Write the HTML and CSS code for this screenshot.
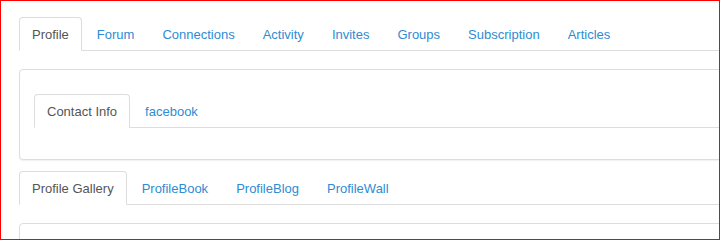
FILE: index.html
```html
<!DOCTYPE html>
<html>
<head>
<meta charset="utf-8">
<link rel="stylesheet" href="styles.css">
</head>
<body>
<div class="frame">
  <div class="content">
    <ul class="tabs">
      <li class="active"><a href="#">Profile</a></li>
      <li><a href="#">Forum</a></li>
      <li><a href="#">Connections</a></li>
      <li><a href="#">Activity</a></li>
      <li><a href="#">Invites</a></li>
      <li><a href="#">Groups</a></li>
      <li><a href="#">Subscription</a></li>
      <li><a href="#">Articles</a></li>
    </ul>
    <div class="panel panel-contact">
      <ul class="tabs">
        <li class="active"><a href="#">Contact Info</a></li>
        <li><a href="#">facebook</a></li>
      </ul>
    </div>
    <ul class="tabs">
      <li class="active"><a href="#">Profile Gallery</a></li>
      <li><a href="#">ProfileBook</a></li>
      <li><a href="#">ProfileBlog</a></li>
      <li><a href="#">ProfileWall</a></li>
    </ul>
    <div class="panel panel-empty"></div>
  </div>
</div>
</body>
</html>
```

FILE: styles.css
```css
html, body {
  margin: 0;
  padding: 0;
  background: #fff;
}

.frame {
  box-sizing: border-box;
  width: 720px;
  height: 240px;
  border: 1px solid #ff0000;
  overflow: hidden;
  padding: 16px 0 0 18px;
  font-family: "Liberation Sans", Arial, sans-serif;
  font-size: 13px;
}

.content {
  width: 760px;
}

.tabs {
  display: flex;
  list-style: none;
  margin: 0;
  padding: 0;
  border-bottom: 1px solid #dddddd;
}

.tabs li {
  margin: 0 2px -1px 0;
}

.tabs a {
  display: block;
  padding: 8px 12px 6px;
  line-height: 18px;
  border: 1px solid transparent;
  border-radius: 4px 4px 0 0;
  color: #2f8bd3;
  text-decoration: none;
}

.tabs .active a {
  color: #555555;
  background: #ffffff;
  border-color: #dddddd #dddddd transparent;
}

.panel {
  margin-top: 18px;
  border: 1px solid #dddddd;
  border-radius: 4px;
  box-shadow: 0 1px 1px rgba(0, 0, 0, 0.06);
  background: #fff;
}

.panel-contact {
  padding: 24px 0 31px 14px;
  margin-bottom: 11px;
}

.panel-empty {
  height: 60px;
}
```
